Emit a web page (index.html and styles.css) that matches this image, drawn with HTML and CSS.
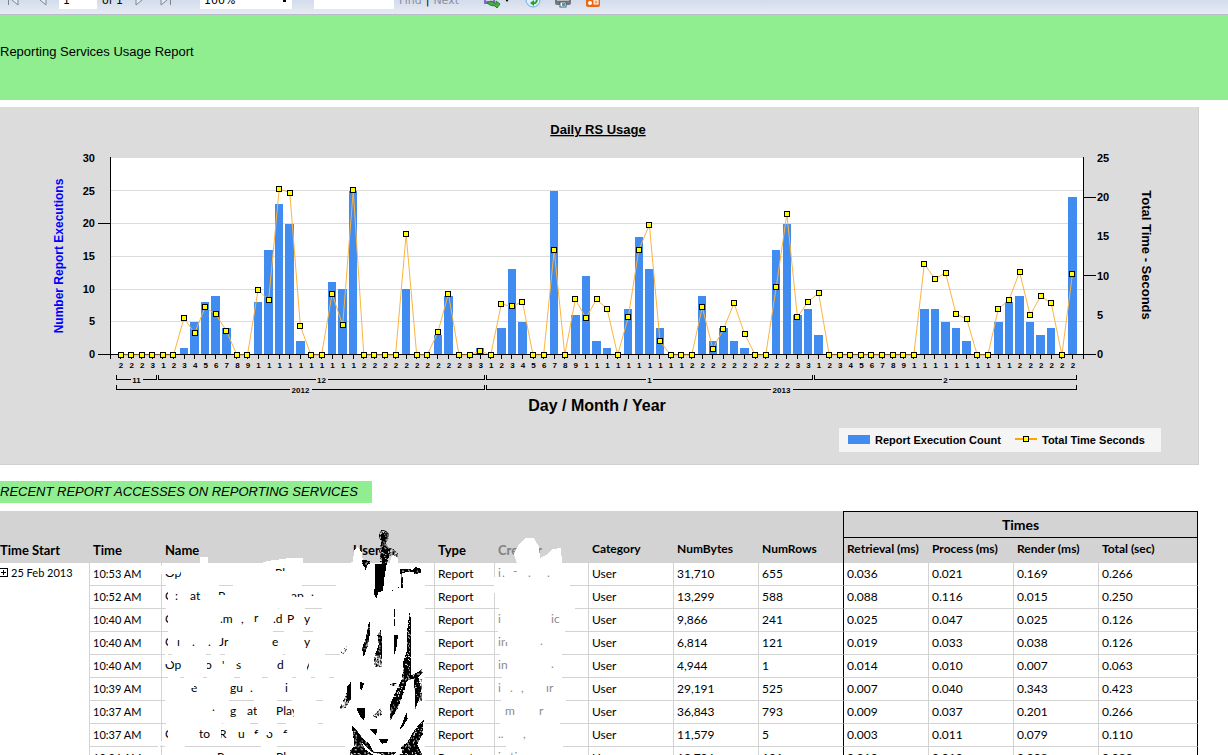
FILE: index.html
```
<!DOCTYPE html>
<html lang="en">
<head>
	<meta charset="UTF-8">
	<title>Reporting Services Usage Report</title>
	<link rel="stylesheet" href="styles.css">
</head>
<body>
	<div class="toolbar">
		<div class="tools">
			<button class="tool first" aria-label="First page"><svg width="12" height="12"><path d="M1.500 1V11M11 1L5 6L11 11Z" class="arrow"/></svg></button>
			<button class="tool prev" aria-label="Previous page"><svg width="8" height="12"><path d="M7 1L1 6L7 11Z" class="arrow"/></svg></button>
			<input class="box page" type="text" value="1" aria-label="Page">
			<span class="of">of 1</span>
			<button class="tool next" aria-label="Next page"><svg width="8" height="12"><path d="M1 1L7 6L1 11Z" class="arrow"/></svg></button>
			<button class="tool last" aria-label="Last page"><svg width="12" height="12"><path d="M1 1L7 6L1 11ZM10.500 1V11" class="arrow"/></svg></button>
			<select class="box scale" aria-label="Zoom"><option>100%</option></select>
			<input class="box search" type="text" aria-label="Find text">
			<a class="link" href="#">Find</a><span class="bar">|</span><a class="link" href="#">Next</a>
			<button class="tool export" aria-label="Export">
				<svg width="28" height="16"><rect x="1" y="1" width="11" height="11" fill="#7d6bc4"/><path d="M3 3H10V9H3Z" fill="#d9d4f2"/><path d="M4 11L8 9L13 12L13 9L17 12L14 16L12 14Q7 14 4 11Z" fill="#48ad45" stroke="#28812d"/><path d="M22 7H26L24 10Z"/></svg>
			</button>
			<button class="tool refresh" aria-label="Refresh">
				<svg width="16" height="16"><circle cx="8" cy="8" r="7" fill="#dceeff" stroke="#71a9df"/><path d="M4 6Q8 2 11 6M12 8Q11 12 8 11" fill="none" stroke="#26a02b" stroke-width="2"/><path d="M5 11L9 8V14Z" fill="#26a02b"/></svg>
			</button>
			<button class="tool print" aria-label="Print">
				<svg width="16" height="16"><rect y="5" width="16" height="8" rx="2" fill="#727579"/><rect x="2" y="7" width="12" height="2" fill="#b6babf"/><rect x="5" y="10" width="6" height="5" fill="#fff" stroke="#555c65"/><rect x="7" y="11" width="3" height="3" fill="#3c9fd1"/></svg>
			</button>
			<button class="tool feed" aria-label="Data feed">
				<svg width="14" height="16"><rect y="1" width="14" height="14" rx="2" fill="#e96815"/><circle cx="4" cy="11" r="2" fill="#fff"/><rect x="8" y="8" width="4" height="4" fill="#f5a468" stroke="#fff"/></svg>
			</button>
		</div>
	</div>
	<h1 class="title">Reporting Services Usage Report</h1>
	<div class="chart">
		<svg id="chart" viewBox="0 107 1199 358" role="img" aria-label="Daily RS Usage"></svg>
	</div>
	<h2 class="subtitle">RECENT REPORT ACCESSES ON REPORTING SERVICES</h2>
	<div class="accesses">
		<table>
			<colgroup>
				<col class="c-start"><col class="c-time"><col class="c-name"><col class="c-user"><col class="c-type"><col class="c-creator">
				<col class="c-num"><col class="c-num"><col class="c-num"><col class="c-num"><col class="c-num"><col class="c-num"><col>
			</colgroup>
			<thead>
				<tr>
					<th class="big" rowspan="2">Time Start</th>
					<th class="big" rowspan="2">Time</th>
					<th class="big" rowspan="2">Name</th>
					<th class="big" rowspan="2">User</th>
					<th class="big" rowspan="2">Type</th>
					<th class="big light" rowspan="2">Creator</th>
					<th rowspan="2">Category</th>
					<th rowspan="2">NumBytes</th>
					<th rowspan="2">NumRows</th>
					<th class="times" colspan="4">Times</th>
				</tr>
				<tr>
					<th class="edge">Retrieval (ms)</th>
					<th>Process (ms)</th>
					<th>Render (ms)</th>
					<th class="end">Total (sec)</th>
				</tr>
			</thead>
			<tbody id="rows"></tbody>
		</table>
		<svg class="scribble" width="600" height="244" viewBox="0 511 600 244" aria-hidden="true">
			<defs>
				<pattern id="specks" width="71" height="67" patternUnits="userSpaceOnUse">
					<rect width="71" height="67"/>
					<path id="dots" fill="#fff"/>
				</pattern>
				<pattern id="spray" width="73" height="79" patternUnits="userSpaceOnUse">
					<path id="drops"/>
				</pattern>
			</defs>
			<!-- erased areas -->
			<path class="erase" d="M163 563H200V557H208V563H261L267 561L283 559L289 558H303V563H349L353 562L354 550L358 547L362 553L363 563H425V755H165V741H160V755H158V745H166V710H165V690H167V655H165V640H168V610H166V574H160V566H163Z"/>
			<path class="erase" d="M390 563L391 558L395 553L398 559L399 566Z"/>
			<path class="erase" d="M494 577H498V563H517L514 554L519 544L526 538H534L539 547L540 558L546 555L552 549L561 548L562 563V585H570L575 608L565 631L562 654V677L566 700L560 723L564 755H510L500 731L502 677L498 631L500 593H494Z"/>
			<path class="rule" d="M219 585H233M302 585H336M278 608H279M305 608H322M273 631H284M303 631H313M168 654H172M206 654H211M220 654H225M283 654H285M325 654H340M165 677H168M180 677H184M203 677H207M234 677H240M262 677H268M292 677H296M311 677H315M329 677H334M229 700H254M277 700H292M316 700H323M222 723H223M250 723H258M277 723H286M318 723H323M185 746H261M277 746H345"/>
			<!-- what is left of the names -->
			<g class="left">
				<text x="165" y="577">Op</text><text x="275" y="577">Pl</text>
				<text x="165" y="600">C</text><text x="175" y="600">:</text><text x="190" y="600">at</text><text x="218" y="600">P</text><text x="291" y="600">ab</text><text x="311" y="596">.</text>
				<text x="165" y="623">C</text><text x="220" y="623">.m</text><text x="241" y="623">,</text><text x="254" y="622">r</text><text x="273" y="623">.d</text><text x="287" y="623">P</text><text x="304" y="623">y</text>
				<text x="165" y="646">C</text><text x="177" y="646">ı</text><text x="192" y="646">.</text><text x="208" y="646">.</text><text x="219" y="646">Jr</text><text x="272" y="646">e</text><text x="304" y="646">y</text>
				<text x="165" y="669">Op</text><text x="205" y="669">o</text><text x="222" y="669">'</text><text x="236" y="669">s</text><text x="277" y="669">d</text><text x="304" y="669">y</text>
				<text x="191" y="692">e</text><text x="230" y="692">gu</text><text x="250" y="692">.</text><text x="285" y="692">i</text>
				<text x="212" y="711">.</text><text x="230" y="715">g</text><text x="247" y="715">at</text><text x="276" y="715">Play</text>
				<text x="165" y="738">C</text><text x="199" y="738">to</text><text x="219" y="738">R</text><text x="238" y="738">u</text><text x="254" y="738">f</text><text x="266" y="738">o</text><text x="283" y="738">f</text>
				<text x="217" y="761">R</text><text x="276" y="761">Pl</text>
			</g>
			<g class="left light">
				<text x="498" y="577">i</text><text x="502" y="577">.</text><text x="513" y="575">-</text><text x="528" y="577">.</text><text x="547" y="577">.</text>
				<text x="498" y="623">i</text><text x="551" y="623">ic</text>
				<text x="498" y="646">in</text><text x="540" y="645">.</text>
				<text x="498" y="669">in</text><text x="551" y="668">.</text>
				<text x="498" y="692">i</text><text x="510" y="692">.</text><text x="521" y="692">,</text><text x="546" y="692">ır</text>
				<text x="505" y="715">m</text><text x="539" y="715">r</text>
				<text x="498" y="738">..</text><text x="523" y="738">,</text>
				<text x="498" y="761">in</text><text x="510" y="761">ti</text>
			</g>
			<path class="erase" d="M163 567H180V574H163ZM273 571H287V580H273ZM168 590H174V602H168ZM168 613H174V625H168ZM168 636H174V648H168ZM165 659H171V664H165ZM168 728H174V740H168ZM216 595H228V602H216ZM290 588H306V594H290ZM290 597H306V602H290ZM203 661H207V671H203ZM235 660H238V664H235ZM304 659H307V672H304ZM309 659H313V676H309ZM252 660H258V672H252ZM191 684H194V688H191ZM257 706H261V717H257ZM294 708H298V722H294ZM218 728H221V740H218ZM253 734H262V740H253ZM264 730H269V735H264ZM282 733H288V740H282ZM508 660H514V671H508ZM505 639H512V642H505Z"/>
			<!-- black brush marks over the user column -->
			<svg x="335" y="525" width="105" height="230" viewBox="0 0 315 690">
				<path fill="url(#spray)" d="M133 18L150 14L162 24L163 38L157 48L160 66L175 73L188 83L190 98L176 91L160 92L157 116H137L133 78L139 50L132 40Z"/>
				<path fill="url(#specks)" d="M139 26L152 20L158 34L151 45L154 65L166 76L163 90L155 116H142L137 82L145 60L138 42ZM80 104L104 108L107 117L95 119L94 142L90 130L81 113ZM193 131L235 134L240 126L258 132V142L240 149L235 141L202 143L204 188L198 191V154Z"/>
				<path d="M121 117H155L148 160L144 198L129 203L124 222L118 208Z"/>
				<path d="M178 252H181V275H178ZM177 283H181V302H177ZM171 195H174V198H171ZM188 186H191V189H188ZM178 331H188L187 359L178 389Z"/>
				<path fill="url(#specks)" d="M103 284L106 321L98 364L86 396L81 369L92 342ZM139 312L141 392L121 387L131 358L127 330ZM224 261L228 284L229 450L245 444L261 432L263 445L250 458L258 494L251 526L241 552L237 461L215 468L207 502L188 550L165 588V540L183 498L202 461L204 412L216 378V320Z"/>
				<path fill="url(#spray)" d="M15 379L35 363L36 375L26 389ZM120 387H140V425H118V400ZM165 470H187V482H167ZM240 460L262 462L261 526L245 534ZM46 471L48 522L31 549L17 557L15 545L32 512ZM113 573L139 546L140 570L122 580Z"/>
				<path d="M75 472L87 473L84 487L77 498ZM37 485L47 471V522L34 530ZM64 549H90L88 588L77 577ZM214 563L218 581L205 603L193 614L203 592ZM103 612H127L123 632ZM132 642L158 643L157 653L140 656Z"/>
				<path fill="url(#specks)" d="M50 600L66 616L82 639L104 658L117 682H190L201 662L216 654L239 614L266 584L263 628L247 658L263 690H46V674L59 665Z"/>
				<path fill="#fff" d="M82 655L112 682L145 690H176L198 667L203 686L182 690H115L90 673Z"/>
			</svg>
		</svg>
	</div>
	<script src="report.js"></script>
</body>
</html>
```
FILE: styles.css
```
*{
	box-sizing: border-box;
}
body{
	margin: 0;
	height: 100vh;
	overflow: hidden;
	background-color: #fff;
	color: #000;
	font-family: "Liberation Sans", Arial, sans-serif;
}
.toolbar{
	display: flex;
	align-items: flex-end;
	height: 15px;
	overflow: hidden;
	background: linear-gradient(#d3dcec, #e8ebf4);
	border-bottom: 1px solid #b9bdc9;
}
.tools{
	display: flex;
	align-items: flex-end;
	height: 28px;
	padding: 0 0 5px 7px;
	font: 11px/16px "DejaVu Sans", Verdana, sans-serif;
}
.tool{
	display: flex;
	padding: 0;
	border: 0;
	background: none;
}
.first, .prev, .next, .last{
	padding-bottom: 3px;
}
.export, .refresh, .print, .feed{
	padding-bottom: 1px;
}
.arrow{
	fill: #e6eaf2;
	stroke: #7e8590;
}
.prev{
	margin-left: 20px;
}
.box{
	height: 20px;
	padding: 3px 4px 0;
	border: 0;
	background-color: #fff;
	font: inherit;
	color: #000;
}
.page{
	width: 38px;
	margin-left: 12px;
}
.of{
	margin-left: 5px;
}
.next{
	margin-left: 12px;
}
.last{
	margin-left: 17px;
}
.scale{
	width: 92px;
	margin-left: 28px;
	appearance: none;
	background-image: linear-gradient(#000, #000);
	background-size: 3px 2px;
	background-position: 83px 11px;
	background-repeat: no-repeat;
}
.search{
	width: 80px;
	margin-left: 22px;
}
.link{
	color: #8b8f98;
	text-decoration: none;
}
.search + .link{
	margin-left: 5px;
}
.bar{
	padding: 0 4px;
}
.export{
	margin-left: 24px;
}
.refresh{
	margin-left: 14px;
}
.print{
	margin-left: 14px;
}
.feed{
	margin-left: 15px;
}
.title{
	margin: 0;
	padding: 29px 0 40px;
	background-color: #90ee90;
	font-size: 13px;
	line-height: 16px;
	font-weight: normal;
}
.chart{
	margin: 7px 29px 0 0;
	background-color: #dcdcdc;
	box-shadow: inset -1px -1px 0 #d0d0d0;
}
.chart svg{
	display: block;
	width: 100%;
	font-weight: bold;
	font-size: 11px;
}
.plot{
	fill: #fff;
}
.grid{
	stroke: #dcdcdc;
}
.axis{
	fill: none;
	stroke: #000;
	shape-rendering: crispEdges;
}
.count{
	fill: #418cf0;
	shape-rendering: crispEdges;
}
.seconds{
	fill: none;
	stroke: #fcb441;
}
.seconds.key{
	stroke: #ffa500;
	stroke-width: 2;
}
.marker{
	fill: #ff0;
	stroke: #000;
	shape-rendering: crispEdges;
}
.small{
	font-size: 8px;
	text-anchor: middle;
}
.heading{
	font-size: 13px;
	text-decoration: underline;
	text-anchor: middle;
}
.x-title{
	font-size: 16px;
	text-anchor: middle;
}
.y-title{
	fill: #00f;
	font-size: 12px;
	text-anchor: middle;
}
.y2-title{
	font-size: 13px;
	text-anchor: middle;
}
.right{
	text-anchor: end;
}
.legend{
	fill: #f5f5f5;
}
.subtitle{
	width: fit-content;
	margin: 16px 0 8px;
	padding: 0 14px 0 0;
	background-color: #90ee90;
	font-size: 13px;
	line-height: 22px;
	font-weight: normal;
	font-style: italic;
}
.accesses{
	position: relative;
	margin-right: 30px;
	font-family: Lato, Carlito, Calibri, sans-serif;
}
table{
	width: 100%;
	table-layout: fixed;
	border-collapse: separate;
	border-spacing: 0;
	font-size: 12px;
	line-height: 16px;
}
.c-start{
	width: 89px;
}
.c-time{
	width: 72px;
}
.c-name{
	width: 188px;
}
.c-user, .c-num{
	width: 85px;
}
.c-type{
	width: 60px;
}
.c-creator{
	width: 94px;
}
th{
	height: 25px;
	padding: 0 0 6px 4px;
	background-color: #d3d3d3;
	text-align: left;
	vertical-align: bottom;
	white-space: nowrap;
}
th.big{
	padding-bottom: 5px;
	font-size: 13px;
}
th:first-child.big{
	padding-left: 0;
}
th.light{
	color: #808080;
}
th.times{
	height: 27px;
	padding: 0;
	border: 1px solid #000;
	font-size: 14px;
	text-align: center;
	vertical-align: middle;
}
td{
	height: 23px;
	padding: 0 0 0 4px;
	border-left: 1px solid #d3d3d3;
	border-bottom: 1px solid #d3d3d3;
}
td + td, td.time{
	padding-left: 3px;
}
td.time{
	font-size: 11px;
}
td.start{
	padding: 2px 0 0;
	border: 0;
	font-size: 11px;
	vertical-align: top;
}
th.edge, td.edge{
	padding-left: 3px;
	border-left: 1px solid #000;
}
th.end, td.end{
	border-right: 1px solid #000;
}
.expand{
	display: inline-block;
	width: 8px;
	height: 9px;
	margin-right: 3px;
	padding: 0;
	border: 0;
	background: none;
}
.expand svg{
	display: block;
}
.scribble{
	position: absolute;
	top: 0;
	left: 0;
	shape-rendering: crispEdges;
}
.erase{
	fill: #fff;
}
.rule{
	fill: none;
	stroke: #d3d3d3;
	transform: translateY(0.5px);
}
.left{
	font-size: 12px;
}
.left.light{
	fill: #8c8c8c;
}
```
FILE: report.js
```
// [executions, seconds] by day of month
var months = [
	{ name: '11', first: 27, last: 30, days: {} },
	{ name: '12', first: 1, last: 31, days: {
		3: [1, 4.7], 4: [5, 2.8], 5: [8, 6.1], 6: [9, 5.2], 7: [4, 3.1],
		10: [8, 8.3], 11: [16, 7], 12: [23, 21.2], 13: [20, 20.7], 14: [2, 3.7],
		17: [11, 7.8], 18: [10, 3.8], 19: [25, 21], 24: [10, 15.4],
		27: [3, 2.9], 28: [9, 7.8], 31: [1, 0.5]
	} },
	{ name: '1', first: 1, last: 31, days: {
		2: [4, 6.5], 3: [13, 6.2], 4: [5, 6.8], 7: [25, 13.4], 9: [6, 7.1],
		10: [12, 4.7], 11: [2, 7.1], 12: [1, 5.9], 14: [7, 4.8], 15: [18, 13.4],
		16: [13, 16.6], 17: [4, 1.8], 21: [9, 6.1], 22: [2, 0.8], 23: [4, 3.3],
		24: [2, 6.6], 25: [1, 2.7], 28: [16, 8.7], 29: [20, 18], 30: [6, 4.8], 31: [7, 6.8]
	} },
	{ name: '2', first: 1, last: 25, days: {
		1: [3, 7.9], 11: [7, 11.6], 12: [7, 9.7], 13: [5, 10.5], 14: [4, 5.2],
		15: [2, 4.6], 18: [5, 5.9], 19: [8, 7], 20: [9, 10.6], 21: [5, 5.1],
		22: [3, 7.5], 23: [4, 6.6], 25: [24, 10.3]
	} }
];
var left = 110, right = 1083, base = 354.5;
var step = (right - left) / 92;

function text(x, y, cls, value){
	return '<text x="' + x + '" y="' + y + '" class="' + cls + '">' + value + '</text>';
}
function marker(x, y){
	return '<rect class="marker" x="' + (Math.floor(x) - 2.5) + '" y="' + (Math.round(y) - 2.5) + '" width="5" height="5"/>';
}
// bracket under the day labels with the group name in a gap
function bracket(x1, x2, y, value){
	var mid = (x1 + x2) / 2, gap = value.length * 2.5 + 1;
	return '<path class="axis" d="M' + x1 + ' ' + (y - 5) + 'V' + y + 'H' + (mid - gap) +
		'M' + (mid + gap) + ' ' + y + 'H' + x2 + 'V' + (y - 5) + '"/>' + text(mid, y + 3, 'small', value);
}

var out = '<rect class="plot" x="111" y="158" width="973" height="197"/>';
var i, y;
for(i = 5; i <= 25; i += 5){
	y = Math.floor(base - i * 6.55) + 0.5;
	out += '<path class="grid" d="M111 ' + y + 'H1083"/>';
}
var bars = '', marks = '', labels = '', points = [], ticks = '', n = 0;
months.forEach(function(month){
	for(var d = month.first; d <= month.last; d++){
		var x = left + (++n) * step;
		var day = month.days[d] || [0, 0];
		var py = 355 - day[1] * 7.84;
		if(day[0]){
			bars += '<rect class="count" x="' + (x - 4.3) + '" y="' + (base - day[0] * 6.55) + '" width="8.500" height="' + day[0] * 6.55 + '"/>';
		}
		points.push(x + ',' + py);
		marks += marker(x + 0.5, py);
		ticks += 'M' + (Math.floor(x) + 0.5) + ' 354V359';
		labels += text(x + 0.5, 368, 'small', String(d).charAt(0));
	}
});
out += bars + '<path class="axis" d="M110.500 157V359M1083.500 157V359M98 354.500H1096M98 223.500H110M1084 197.500H1096M1084 275.500H1096' + ticks + '"/>';
out += '<polyline class="seconds" points="' + points.join(' ') + '"/>' + marks + labels;

for(i = 0; i <= 30; i += 5){
	out += text(95, 358 - Math.round(i * 6.53), 'right', i);
}
for(i = 0; i <= 25; i += 5){
	out += text(1097, 358 - Math.round(i * 7.84), '', i);
}
out += bracket(116.5, 156.5, 379.5, '11') + bracket(158.5, 484.5, 379.5, '12');
out += bracket(486.5, 812.5, 379.5, '1') + bracket(814.5, 1076.5, 379.5, '2');
out += bracket(116.5, 484.5, 389.5, '2012') + bracket(486.5, 1076.5, 389.5, '2013');
out += text(598, 134, 'heading', 'Daily RS Usage');
out += text(597, 411, 'x-title', 'Day / Month / Year');
out += '<text class="y-title" transform="translate(63 256) rotate(-90)">Number Report Executions</text>';
out += '<text class="y2-title" transform="translate(1142 255) rotate(90)">Total Time - Seconds</text>';
out += '<rect class="legend" x="839" y="428" width="322" height="24"/>';
out += '<rect class="count" x="848" y="435" width="22" height="9"/>' + text(875, 444, '', 'Report Execution Count');
out += '<path class="seconds key" d="M1015 439H1037"/>' + marker(1026, 439) + text(1042, 444, '', 'Total Time Seconds');
document.getElementById('chart').innerHTML = out;

// grain of the brush marks, same on every load
var seed = 7;
function rand(max){
	seed = (seed * 16807) % 2147483647;
	return Math.floor(seed / 2147483647 * max);
}
function grain(count, w, h){
	var d = '';
	while(count--){
		d += 'M' + rand(w - 3) + ' ' + rand(h - 3) + 'h3v3h-3z';
	}
	return d;
}
document.getElementById('dots').setAttribute('d', grain(75, 71, 67));
document.getElementById('drops').setAttribute('d', grain(420, 73, 79));

var rows = [
	['10:53 AM', '31,710', '655', '0.036', '0.021', '0.169', '0.266'],
	['10:52 AM', '13,299', '588', '0.088', '0.116', '0.015', '0.250'],
	['10:40 AM', '9,866', '241', '0.025', '0.047', '0.025', '0.126'],
	['10:40 AM', '6,814', '121', '0.019', '0.033', '0.038', '0.126'],
	['10:40 AM', '4,944', '1', '0.014', '0.010', '0.007', '0.063'],
	['10:39 AM', '29,191', '525', '0.007', '0.040', '0.343', '0.423'],
	['10:37 AM', '36,843', '793', '0.009', '0.037', '0.201', '0.266'],
	['10:37 AM', '11,579', '5', '0.003', '0.011', '0.079', '0.110'],
	['10:36 AM', '12,706', '191', '0.010', '0.010', '0.008', '0.080']
];
document.getElementById('rows').innerHTML = rows.map(function(r, k){
	var start = k ? '' : '<td class="start" rowspan="' + rows.length + '"><button class="expand" aria-label="Expand"><svg width="8" height="9"><path class="axis" d="M0 0.500H7.500V8.500H0M1 4.500H6M3.500 2V7"/></svg></button>25 Feb 2013</td>';
	return '<tr>' + start + '<td class="time">' + r[0] + '</td><td></td><td></td><td>Report</td><td></td><td>User</td><td>' + r[1] +
		'</td><td>' + r[2] + '</td><td class="edge">' + r[3] + '</td><td>' + r[4] + '</td><td>' + r[5] + '</td><td class="end">' + r[6] + '</td></tr>';
}).join('');
```
